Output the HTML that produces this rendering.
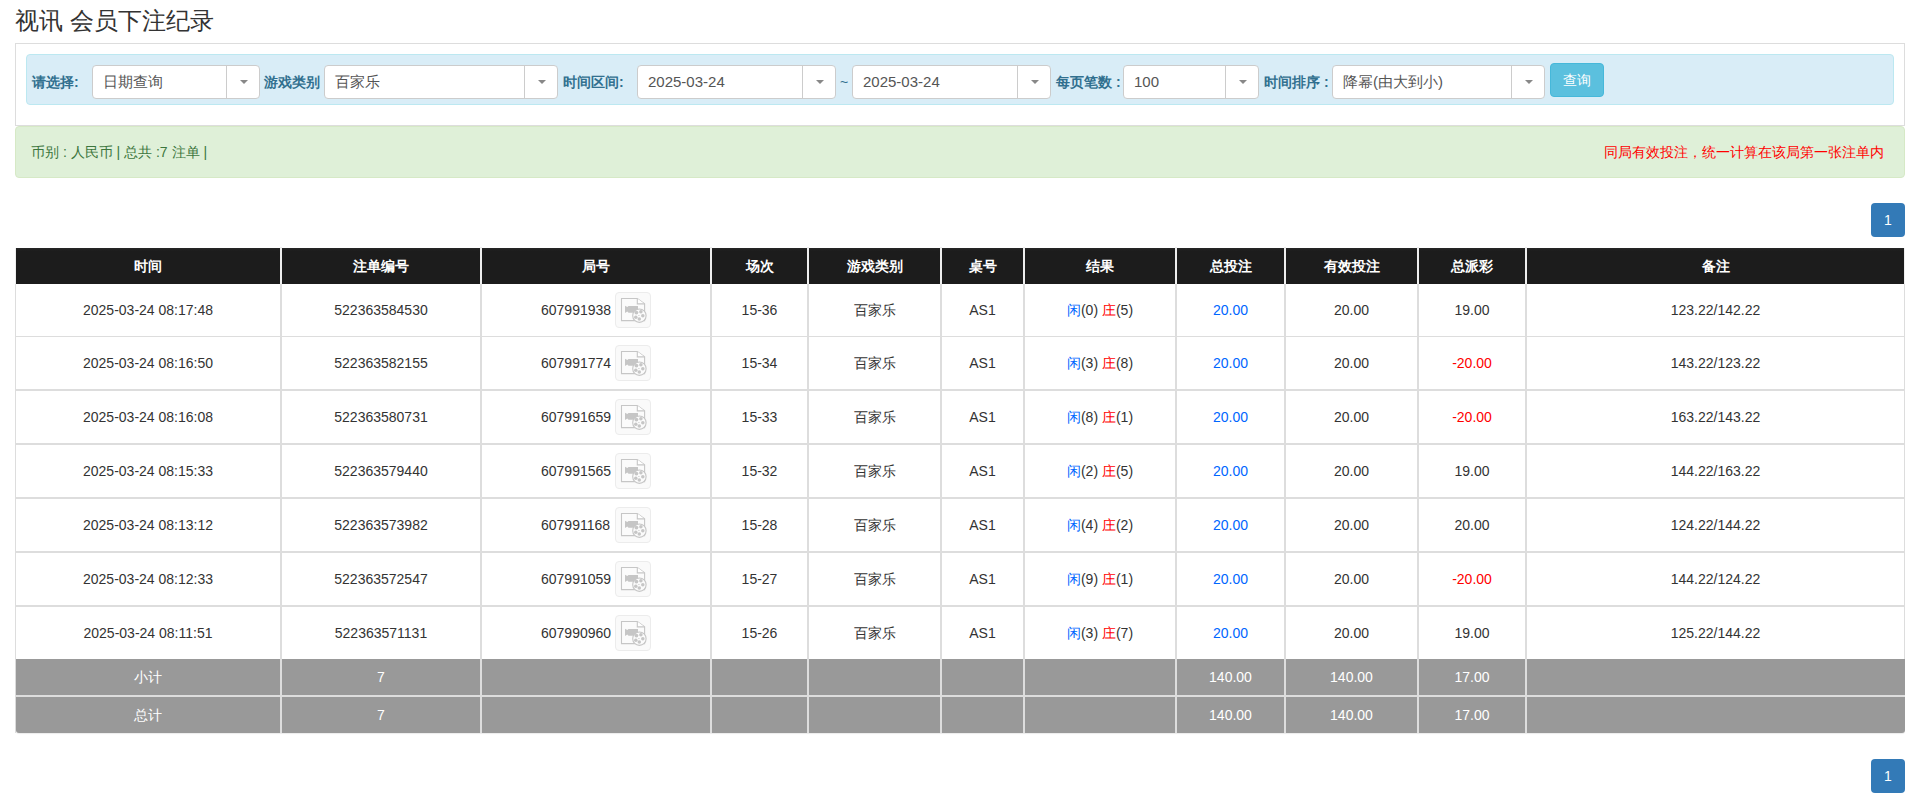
<!DOCTYPE html><html><head><meta charset="utf-8"><style>
*{box-sizing:border-box}
html,body{margin:0;padding:0;background:#fff;width:1905px;height:797px;overflow:hidden;position:relative}
body{font-family:"Liberation Sans",sans-serif;font-size:14px;color:#333}
div,span{position:absolute}
.title{left:15px;top:4px;font-size:24px;line-height:33px;color:#333;white-space:nowrap}
.panel{left:15px;top:43px;width:1890px;height:83px;border:1px solid #ddd}
.info{left:26px;top:54px;width:1868px;height:51px;background:#d9edf7;border:1px solid #bce8f1;border-radius:4px}
.lbl{top:73px;line-height:18px;font-weight:bold;color:#31708f;white-space:nowrap;font-size:14px}
.sel{height:34px;background:#fff;border:1px solid #ccc;border-radius:4px}
.st{left:10px;top:0;line-height:32px;color:#555;white-space:nowrap;font-size:15px}
.dv{top:0;width:1px;height:32px;background:#ccc}
.caret{top:14px;width:0;height:0;border-left:4px solid transparent;border-right:4px solid transparent;border-top:4px solid #888}
.btn{left:1550px;top:63px;width:54px;height:34px;background:#5bc0de;border:1px solid #46b8da;border-radius:4px;color:#fff;text-align:center;line-height:32px}
.succ{left:15px;top:126px;width:1890px;height:52px;background:#dff0d8;border:1px solid #d6e9c6;border-radius:4px;color:#3c763d}
.pg{left:1871px;width:34px;height:34px;background:#337ab7;border-radius:4px;color:#fff;text-align:center;line-height:34px;font-size:14px}
.c{text-align:center;white-space:nowrap}
.hd{background:#1c1c1c;background-image:linear-gradient(#272727,#1c1c1c 3px)}
.th{color:#fff;font-weight:bold;line-height:20px}
.vl{background:#ddd;width:2px}
.hl{background:#ddd;height:1px}
.ft{background:#999}
.ic{width:36px;height:36px;border:1px solid #ececec;border-radius:4px;background:#fafafa}
.ic svg{position:absolute;left:-1px;top:-1px}
.blue{color:#0066ff}.red{color:#f00}
i{font-style:normal}
</style></head><body>
<div class="title">视讯 会员下注纪录</div>
<div class="panel"></div><div class="info"></div>
<div class="lbl" style="left:32px">请选择:</div>
<div class="sel" style="left:92px;width:168px;top:65px"><span class="st">日期查询</span><span class="dv" style="left:133px"></span><span class="caret" style="left:147px"></span></div>
<div class="lbl" style="left:264px">游戏类别</div>
<div class="sel" style="left:324px;width:234px;top:65px"><span class="st">百家乐</span><span class="dv" style="left:199px"></span><span class="caret" style="left:213px"></span></div>
<div class="lbl" style="left:563px">时间区间:</div>
<div class="sel" style="left:637px;width:199px;top:65px"><span class="st">2025-03-24</span><span class="dv" style="left:164px"></span><span class="caret" style="left:178px"></span></div>
<div class="lbl" style="left:840px;font-weight:normal">~</div>
<div class="sel" style="left:852px;width:199px;top:65px"><span class="st">2025-03-24</span><span class="dv" style="left:164px"></span><span class="caret" style="left:178px"></span></div>
<div class="lbl" style="left:1056px">每页笔数 :</div>
<div class="sel" style="left:1123px;width:136px;top:65px"><span class="st">100</span><span class="dv" style="left:101px"></span><span class="caret" style="left:115px"></span></div>
<div class="lbl" style="left:1264px">时间排序 :</div>
<div class="sel" style="left:1332px;width:213px;top:65px"><span class="st">降幂(由大到小)</span><span class="dv" style="left:178px"></span><span class="caret" style="left:192px"></span></div>
<div class="btn">查询</div>
<div class="succ"><span style="left:15px;top:15px;line-height:20px;white-space:nowrap">币别 : 人民币 | 总共 :7 注单 |</span><span style="right:20px;top:15px;line-height:20px;color:#f00;white-space:nowrap">同局有效投注，统一计算在该局第一张注单内</span></div>
<div class="pg" style="top:203px">1</div>
<div class="hd" style="left:16px;top:248px;width:1888px;height:36px"></div>
<div style="left:15px;top:248px;width:1px;height:36px;background:#eee"></div>
<div style="left:1904px;top:248px;width:1px;height:36px;background:#eee"></div>
<div style="left:280px;top:247px;width:2px;height:37px;background:#eee"></div>
<div style="left:480px;top:247px;width:2px;height:37px;background:#eee"></div>
<div style="left:710px;top:247px;width:2px;height:37px;background:#eee"></div>
<div style="left:807px;top:247px;width:2px;height:37px;background:#eee"></div>
<div style="left:940px;top:247px;width:2px;height:37px;background:#eee"></div>
<div style="left:1023px;top:247px;width:2px;height:37px;background:#eee"></div>
<div style="left:1175px;top:247px;width:2px;height:37px;background:#eee"></div>
<div style="left:1284px;top:247px;width:2px;height:37px;background:#eee"></div>
<div style="left:1417px;top:247px;width:2px;height:37px;background:#eee"></div>
<div style="left:1525px;top:247px;width:2px;height:37px;background:#eee"></div>
<div class="c th" style="left:15px;width:266px;top:256px">时间</div>
<div class="c th" style="left:281px;width:200px;top:256px">注单编号</div>
<div class="c th" style="left:481px;width:230px;top:256px">局号</div>
<div class="c th" style="left:711px;width:97px;top:256px">场次</div>
<div class="c th" style="left:808px;width:133px;top:256px">游戏类别</div>
<div class="c th" style="left:941px;width:83px;top:256px">桌号</div>
<div class="c th" style="left:1024px;width:152px;top:256px">结果</div>
<div class="c th" style="left:1176px;width:109px;top:256px">总投注</div>
<div class="c th" style="left:1285px;width:133px;top:256px">有效投注</div>
<div class="c th" style="left:1418px;width:108px;top:256px">总派彩</div>
<div class="c th" style="left:1526px;width:379px;top:256px">备注</div>
<div class="vl" style="left:15px;top:284px;width:1px;height:375px"></div>
<div class="vl" style="left:1904px;top:284px;width:1px;height:375px"></div>
<div class="vl" style="left:280px;top:284px;height:375px"></div>
<div class="vl" style="left:480px;top:284px;height:375px"></div>
<div class="vl" style="left:710px;top:284px;height:375px"></div>
<div class="vl" style="left:807px;top:284px;height:375px"></div>
<div class="vl" style="left:940px;top:284px;height:375px"></div>
<div class="vl" style="left:1023px;top:284px;height:375px"></div>
<div class="vl" style="left:1175px;top:284px;height:375px"></div>
<div class="vl" style="left:1284px;top:284px;height:375px"></div>
<div class="vl" style="left:1417px;top:284px;height:375px"></div>
<div class="vl" style="left:1525px;top:284px;height:375px"></div>
<div class="hl" style="left:15px;top:336px;width:1890px;height:1px"></div>
<div class="hl" style="left:15px;top:389px;width:1890px;height:2px"></div>
<div class="hl" style="left:15px;top:443px;width:1890px;height:2px"></div>
<div class="hl" style="left:15px;top:497px;width:1890px;height:2px"></div>
<div class="hl" style="left:15px;top:551px;width:1890px;height:2px"></div>
<div class="hl" style="left:15px;top:605px;width:1890px;height:2px"></div>
<div class="c" style="left:15px;width:266px;top:300px;line-height:20px">2025-03-24 08:17:48</div>
<div class="c" style="left:281px;width:200px;top:300px;line-height:20px">522363584530</div>
<div style="left:541px;top:300px;line-height:20px;white-space:nowrap">607991938</div>
<div class="ic" style="left:615px;top:292px"><svg width="36" height="36" viewBox="0 0 36 36"><path d="M6.5 6.5H22.3L29.6 11.9V28.6H6.5Z" fill="#fbfbfb" stroke="#c6c6c6" stroke-width="1.1"/><path d="M22.3 6.5V11.9H29.6" fill="#fff" stroke="#c6c6c6" stroke-width="1.1"/><path d="M10 13.8L12.3 15.1L13.5 14H23V20.7H13.5L12.3 19.6L10 20.9Z" fill="#c6c6c6"/><circle cx="24.4" cy="23.7" r="6.7" fill="#fbfbfb" stroke="#c6c6c6" stroke-width="1.1"/><g fill="#c6c6c6"><circle cx="21.4" cy="20.6" r="1.9"/><circle cx="25.9" cy="19.8" r="1.75"/><circle cx="27.8" cy="23.8" r="1.75"/><circle cx="24.3" cy="26.9" r="1.75"/><circle cx="20.8" cy="25.2" r="1.75"/><rect x="23.3" y="23" width="1.2" height="0.8"/></g></svg></div>
<div class="c" style="left:711px;width:97px;top:300px;line-height:20px">15-36</div>
<div class="c" style="left:808px;width:133px;top:300px;line-height:20px">百家乐</div>
<div class="c" style="left:941px;width:83px;top:300px;line-height:20px">AS1</div>
<div class="c" style="left:1024px;width:152px;top:300px;line-height:20px"><i class="blue">闲</i>(0) <i class="red">庄</i>(5)</div>
<div class="c" style="left:1176px;width:109px;top:300px;line-height:20px"><i class="blue">20.00</i></div>
<div class="c" style="left:1285px;width:133px;top:300px;line-height:20px">20.00</div>
<div class="c" style="left:1418px;width:108px;top:300px;line-height:20px">19.00</div>
<div class="c" style="left:1526px;width:379px;top:300px;line-height:20px">123.22/142.22</div>
<div class="c" style="left:15px;width:266px;top:353px;line-height:20px">2025-03-24 08:16:50</div>
<div class="c" style="left:281px;width:200px;top:353px;line-height:20px">522363582155</div>
<div style="left:541px;top:353px;line-height:20px;white-space:nowrap">607991774</div>
<div class="ic" style="left:615px;top:345px"><svg width="36" height="36" viewBox="0 0 36 36"><path d="M6.5 6.5H22.3L29.6 11.9V28.6H6.5Z" fill="#fbfbfb" stroke="#c6c6c6" stroke-width="1.1"/><path d="M22.3 6.5V11.9H29.6" fill="#fff" stroke="#c6c6c6" stroke-width="1.1"/><path d="M10 13.8L12.3 15.1L13.5 14H23V20.7H13.5L12.3 19.6L10 20.9Z" fill="#c6c6c6"/><circle cx="24.4" cy="23.7" r="6.7" fill="#fbfbfb" stroke="#c6c6c6" stroke-width="1.1"/><g fill="#c6c6c6"><circle cx="21.4" cy="20.6" r="1.9"/><circle cx="25.9" cy="19.8" r="1.75"/><circle cx="27.8" cy="23.8" r="1.75"/><circle cx="24.3" cy="26.9" r="1.75"/><circle cx="20.8" cy="25.2" r="1.75"/><rect x="23.3" y="23" width="1.2" height="0.8"/></g></svg></div>
<div class="c" style="left:711px;width:97px;top:353px;line-height:20px">15-34</div>
<div class="c" style="left:808px;width:133px;top:353px;line-height:20px">百家乐</div>
<div class="c" style="left:941px;width:83px;top:353px;line-height:20px">AS1</div>
<div class="c" style="left:1024px;width:152px;top:353px;line-height:20px"><i class="blue">闲</i>(3) <i class="red">庄</i>(8)</div>
<div class="c" style="left:1176px;width:109px;top:353px;line-height:20px"><i class="blue">20.00</i></div>
<div class="c" style="left:1285px;width:133px;top:353px;line-height:20px">20.00</div>
<div class="c" style="left:1418px;width:108px;top:353px;line-height:20px"><i class="red">-20.00</i></div>
<div class="c" style="left:1526px;width:379px;top:353px;line-height:20px">143.22/123.22</div>
<div class="c" style="left:15px;width:266px;top:407px;line-height:20px">2025-03-24 08:16:08</div>
<div class="c" style="left:281px;width:200px;top:407px;line-height:20px">522363580731</div>
<div style="left:541px;top:407px;line-height:20px;white-space:nowrap">607991659</div>
<div class="ic" style="left:615px;top:399px"><svg width="36" height="36" viewBox="0 0 36 36"><path d="M6.5 6.5H22.3L29.6 11.9V28.6H6.5Z" fill="#fbfbfb" stroke="#c6c6c6" stroke-width="1.1"/><path d="M22.3 6.5V11.9H29.6" fill="#fff" stroke="#c6c6c6" stroke-width="1.1"/><path d="M10 13.8L12.3 15.1L13.5 14H23V20.7H13.5L12.3 19.6L10 20.9Z" fill="#c6c6c6"/><circle cx="24.4" cy="23.7" r="6.7" fill="#fbfbfb" stroke="#c6c6c6" stroke-width="1.1"/><g fill="#c6c6c6"><circle cx="21.4" cy="20.6" r="1.9"/><circle cx="25.9" cy="19.8" r="1.75"/><circle cx="27.8" cy="23.8" r="1.75"/><circle cx="24.3" cy="26.9" r="1.75"/><circle cx="20.8" cy="25.2" r="1.75"/><rect x="23.3" y="23" width="1.2" height="0.8"/></g></svg></div>
<div class="c" style="left:711px;width:97px;top:407px;line-height:20px">15-33</div>
<div class="c" style="left:808px;width:133px;top:407px;line-height:20px">百家乐</div>
<div class="c" style="left:941px;width:83px;top:407px;line-height:20px">AS1</div>
<div class="c" style="left:1024px;width:152px;top:407px;line-height:20px"><i class="blue">闲</i>(8) <i class="red">庄</i>(1)</div>
<div class="c" style="left:1176px;width:109px;top:407px;line-height:20px"><i class="blue">20.00</i></div>
<div class="c" style="left:1285px;width:133px;top:407px;line-height:20px">20.00</div>
<div class="c" style="left:1418px;width:108px;top:407px;line-height:20px"><i class="red">-20.00</i></div>
<div class="c" style="left:1526px;width:379px;top:407px;line-height:20px">163.22/143.22</div>
<div class="c" style="left:15px;width:266px;top:461px;line-height:20px">2025-03-24 08:15:33</div>
<div class="c" style="left:281px;width:200px;top:461px;line-height:20px">522363579440</div>
<div style="left:541px;top:461px;line-height:20px;white-space:nowrap">607991565</div>
<div class="ic" style="left:615px;top:453px"><svg width="36" height="36" viewBox="0 0 36 36"><path d="M6.5 6.5H22.3L29.6 11.9V28.6H6.5Z" fill="#fbfbfb" stroke="#c6c6c6" stroke-width="1.1"/><path d="M22.3 6.5V11.9H29.6" fill="#fff" stroke="#c6c6c6" stroke-width="1.1"/><path d="M10 13.8L12.3 15.1L13.5 14H23V20.7H13.5L12.3 19.6L10 20.9Z" fill="#c6c6c6"/><circle cx="24.4" cy="23.7" r="6.7" fill="#fbfbfb" stroke="#c6c6c6" stroke-width="1.1"/><g fill="#c6c6c6"><circle cx="21.4" cy="20.6" r="1.9"/><circle cx="25.9" cy="19.8" r="1.75"/><circle cx="27.8" cy="23.8" r="1.75"/><circle cx="24.3" cy="26.9" r="1.75"/><circle cx="20.8" cy="25.2" r="1.75"/><rect x="23.3" y="23" width="1.2" height="0.8"/></g></svg></div>
<div class="c" style="left:711px;width:97px;top:461px;line-height:20px">15-32</div>
<div class="c" style="left:808px;width:133px;top:461px;line-height:20px">百家乐</div>
<div class="c" style="left:941px;width:83px;top:461px;line-height:20px">AS1</div>
<div class="c" style="left:1024px;width:152px;top:461px;line-height:20px"><i class="blue">闲</i>(2) <i class="red">庄</i>(5)</div>
<div class="c" style="left:1176px;width:109px;top:461px;line-height:20px"><i class="blue">20.00</i></div>
<div class="c" style="left:1285px;width:133px;top:461px;line-height:20px">20.00</div>
<div class="c" style="left:1418px;width:108px;top:461px;line-height:20px">19.00</div>
<div class="c" style="left:1526px;width:379px;top:461px;line-height:20px">144.22/163.22</div>
<div class="c" style="left:15px;width:266px;top:515px;line-height:20px">2025-03-24 08:13:12</div>
<div class="c" style="left:281px;width:200px;top:515px;line-height:20px">522363573982</div>
<div style="left:541px;top:515px;line-height:20px;white-space:nowrap">607991168</div>
<div class="ic" style="left:615px;top:507px"><svg width="36" height="36" viewBox="0 0 36 36"><path d="M6.5 6.5H22.3L29.6 11.9V28.6H6.5Z" fill="#fbfbfb" stroke="#c6c6c6" stroke-width="1.1"/><path d="M22.3 6.5V11.9H29.6" fill="#fff" stroke="#c6c6c6" stroke-width="1.1"/><path d="M10 13.8L12.3 15.1L13.5 14H23V20.7H13.5L12.3 19.6L10 20.9Z" fill="#c6c6c6"/><circle cx="24.4" cy="23.7" r="6.7" fill="#fbfbfb" stroke="#c6c6c6" stroke-width="1.1"/><g fill="#c6c6c6"><circle cx="21.4" cy="20.6" r="1.9"/><circle cx="25.9" cy="19.8" r="1.75"/><circle cx="27.8" cy="23.8" r="1.75"/><circle cx="24.3" cy="26.9" r="1.75"/><circle cx="20.8" cy="25.2" r="1.75"/><rect x="23.3" y="23" width="1.2" height="0.8"/></g></svg></div>
<div class="c" style="left:711px;width:97px;top:515px;line-height:20px">15-28</div>
<div class="c" style="left:808px;width:133px;top:515px;line-height:20px">百家乐</div>
<div class="c" style="left:941px;width:83px;top:515px;line-height:20px">AS1</div>
<div class="c" style="left:1024px;width:152px;top:515px;line-height:20px"><i class="blue">闲</i>(4) <i class="red">庄</i>(2)</div>
<div class="c" style="left:1176px;width:109px;top:515px;line-height:20px"><i class="blue">20.00</i></div>
<div class="c" style="left:1285px;width:133px;top:515px;line-height:20px">20.00</div>
<div class="c" style="left:1418px;width:108px;top:515px;line-height:20px">20.00</div>
<div class="c" style="left:1526px;width:379px;top:515px;line-height:20px">124.22/144.22</div>
<div class="c" style="left:15px;width:266px;top:569px;line-height:20px">2025-03-24 08:12:33</div>
<div class="c" style="left:281px;width:200px;top:569px;line-height:20px">522363572547</div>
<div style="left:541px;top:569px;line-height:20px;white-space:nowrap">607991059</div>
<div class="ic" style="left:615px;top:561px"><svg width="36" height="36" viewBox="0 0 36 36"><path d="M6.5 6.5H22.3L29.6 11.9V28.6H6.5Z" fill="#fbfbfb" stroke="#c6c6c6" stroke-width="1.1"/><path d="M22.3 6.5V11.9H29.6" fill="#fff" stroke="#c6c6c6" stroke-width="1.1"/><path d="M10 13.8L12.3 15.1L13.5 14H23V20.7H13.5L12.3 19.6L10 20.9Z" fill="#c6c6c6"/><circle cx="24.4" cy="23.7" r="6.7" fill="#fbfbfb" stroke="#c6c6c6" stroke-width="1.1"/><g fill="#c6c6c6"><circle cx="21.4" cy="20.6" r="1.9"/><circle cx="25.9" cy="19.8" r="1.75"/><circle cx="27.8" cy="23.8" r="1.75"/><circle cx="24.3" cy="26.9" r="1.75"/><circle cx="20.8" cy="25.2" r="1.75"/><rect x="23.3" y="23" width="1.2" height="0.8"/></g></svg></div>
<div class="c" style="left:711px;width:97px;top:569px;line-height:20px">15-27</div>
<div class="c" style="left:808px;width:133px;top:569px;line-height:20px">百家乐</div>
<div class="c" style="left:941px;width:83px;top:569px;line-height:20px">AS1</div>
<div class="c" style="left:1024px;width:152px;top:569px;line-height:20px"><i class="blue">闲</i>(9) <i class="red">庄</i>(1)</div>
<div class="c" style="left:1176px;width:109px;top:569px;line-height:20px"><i class="blue">20.00</i></div>
<div class="c" style="left:1285px;width:133px;top:569px;line-height:20px">20.00</div>
<div class="c" style="left:1418px;width:108px;top:569px;line-height:20px"><i class="red">-20.00</i></div>
<div class="c" style="left:1526px;width:379px;top:569px;line-height:20px">144.22/124.22</div>
<div class="c" style="left:15px;width:266px;top:623px;line-height:20px">2025-03-24 08:11:51</div>
<div class="c" style="left:281px;width:200px;top:623px;line-height:20px">522363571131</div>
<div style="left:541px;top:623px;line-height:20px;white-space:nowrap">607990960</div>
<div class="ic" style="left:615px;top:615px"><svg width="36" height="36" viewBox="0 0 36 36"><path d="M6.5 6.5H22.3L29.6 11.9V28.6H6.5Z" fill="#fbfbfb" stroke="#c6c6c6" stroke-width="1.1"/><path d="M22.3 6.5V11.9H29.6" fill="#fff" stroke="#c6c6c6" stroke-width="1.1"/><path d="M10 13.8L12.3 15.1L13.5 14H23V20.7H13.5L12.3 19.6L10 20.9Z" fill="#c6c6c6"/><circle cx="24.4" cy="23.7" r="6.7" fill="#fbfbfb" stroke="#c6c6c6" stroke-width="1.1"/><g fill="#c6c6c6"><circle cx="21.4" cy="20.6" r="1.9"/><circle cx="25.9" cy="19.8" r="1.75"/><circle cx="27.8" cy="23.8" r="1.75"/><circle cx="24.3" cy="26.9" r="1.75"/><circle cx="20.8" cy="25.2" r="1.75"/><rect x="23.3" y="23" width="1.2" height="0.8"/></g></svg></div>
<div class="c" style="left:711px;width:97px;top:623px;line-height:20px">15-26</div>
<div class="c" style="left:808px;width:133px;top:623px;line-height:20px">百家乐</div>
<div class="c" style="left:941px;width:83px;top:623px;line-height:20px">AS1</div>
<div class="c" style="left:1024px;width:152px;top:623px;line-height:20px"><i class="blue">闲</i>(3) <i class="red">庄</i>(7)</div>
<div class="c" style="left:1176px;width:109px;top:623px;line-height:20px"><i class="blue">20.00</i></div>
<div class="c" style="left:1285px;width:133px;top:623px;line-height:20px">20.00</div>
<div class="c" style="left:1418px;width:108px;top:623px;line-height:20px">19.00</div>
<div class="c" style="left:1526px;width:379px;top:623px;line-height:20px">125.22/144.22</div>
<div style="left:15px;top:659px;width:1px;height:74px;background:#ddd"></div>
<div class="ft" style="left:16px;top:659px;width:1889px;height:74px;border-radius:0 0 3px 3px;box-shadow:0 1px 1px rgba(0,0,0,.08)"></div>
<div style="left:15px;top:695px;width:1890px;height:2px;background:#ddd"></div>
<div class="vl" style="left:280px;top:659px;height:74px"></div>
<div class="vl" style="left:480px;top:659px;height:74px"></div>
<div class="vl" style="left:710px;top:659px;height:74px"></div>
<div class="vl" style="left:807px;top:659px;height:74px"></div>
<div class="vl" style="left:940px;top:659px;height:74px"></div>
<div class="vl" style="left:1023px;top:659px;height:74px"></div>
<div class="vl" style="left:1175px;top:659px;height:74px"></div>
<div class="vl" style="left:1284px;top:659px;height:74px"></div>
<div class="vl" style="left:1417px;top:659px;height:74px"></div>
<div class="vl" style="left:1525px;top:659px;height:74px"></div>
<div class="c" style="left:15px;width:266px;top:667px;line-height:20px;color:#fff">小计</div>
<div class="c" style="left:281px;width:200px;top:667px;line-height:20px;color:#fff">7</div>
<div class="c" style="left:1176px;width:109px;top:667px;line-height:20px;color:#fff">140.00</div>
<div class="c" style="left:1285px;width:133px;top:667px;line-height:20px;color:#fff">140.00</div>
<div class="c" style="left:1418px;width:108px;top:667px;line-height:20px;color:#fff">17.00</div>
<div class="c" style="left:15px;width:266px;top:705px;line-height:20px;color:#fff">总计</div>
<div class="c" style="left:281px;width:200px;top:705px;line-height:20px;color:#fff">7</div>
<div class="c" style="left:1176px;width:109px;top:705px;line-height:20px;color:#fff">140.00</div>
<div class="c" style="left:1285px;width:133px;top:705px;line-height:20px;color:#fff">140.00</div>
<div class="c" style="left:1418px;width:108px;top:705px;line-height:20px;color:#fff">17.00</div>
<div class="pg" style="top:759px">1</div>
</body></html>
